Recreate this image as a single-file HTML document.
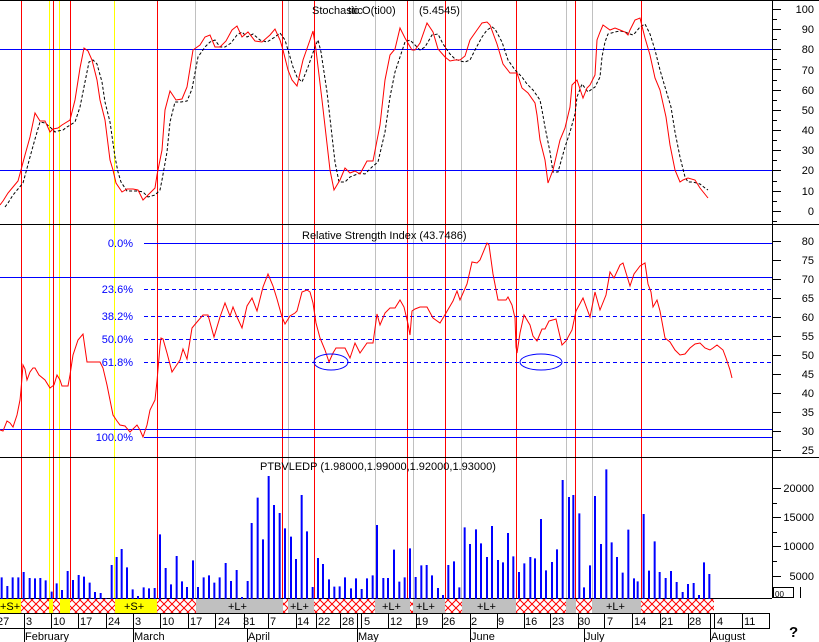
<!DOCTYPE html>
<html><head><meta charset="utf-8"><style>
html,body{margin:0;padding:0;background:#fff;}
svg{display:block;font-family:"Liberation Sans",sans-serif;}
</style></head><body>
<svg width="819" height="642" viewBox="0 0 819 642" xmlns="http://www.w3.org/2000/svg">
<defs>
<pattern id="h" width="8" height="8" patternUnits="userSpaceOnUse">
<rect width="8" height="8" fill="#fff"/>
<path d="M0 0L8 8M8 0L0 8" stroke="#f00" stroke-width="1"/>
</pattern>
</defs>
<rect width="819" height="642" fill="#fff"/>
<!-- vertical lines -->
<g stroke-width="1" shape-rendering="crispEdges">
<g stroke="#c0c0c0"><path d="M195.5 0V598M288.5 0V598M375.5 0V598M413.5 0V598M461.5 0V598M566.5 0V598M592.5 0V598"/></g>
<g stroke="#ff0"><path d="M49.5 0V598M59.5 0V598M114.5 0V598"/></g>
<g stroke="#f00"><path d="M21.5 0V598M53.5 0V598M70.5 0V598M157.5 0V598M282.5 0V598M314.5 0V598M407.5 0V598M445.5 0V598M516.5 0V598M575.5 0V598M641.5 0V598"/></g>
</g>
<!-- horizontal lines -->
<g shape-rendering="crispEdges" stroke-width="1">
<path d="M0 49.5H772M0 170.5H772M0 277.5H772M0 429.5H772M144 243.5H772M144 437.5H772" stroke="#00f"/>
<path d="M144 289.5H772M144 316.5H772M144 339.5H772M144 362.5H772" stroke="#00f" stroke-dasharray="4,3"/>
<path d="M0 0.5H819M0 224.5H819M0 457.5H819M0 598.5H772M772.5 0V598" stroke="#000"/>
</g>
<!-- stochastic -->
<polyline fill="none" stroke="#000" stroke-dasharray="3,2" transform="translate(5,2)" points="0,205 3,201 8,193 13,187 18,181 21,170 25,155 30,137 35,120 40,121 45,125 50,130 53,129 58,128 62,125 70,120 75,105 80,80 84,60 88,58 92,62 97,80 100,100 105,120 110,155 113,170 116,180 122,189 127,189 133,189 138,190 143,195 150,193 155,188 157,178 162,150 165,120 170,100 176,100 182,99 187,87 193,55 200,45 205,40 210,38 215,45 220,45 226,41 232,33 237,30 242,35 248,32 255,38 262,40 270,35 275,31 280,38 283,48 288,65 292,75 297,80 303,65 310,45 313,38 316,50 322,90 330,160 334,180 340,180 345,175 350,173 355,171 360,172 367,165 373,160 380,130 385,95 390,70 395,55 400,40 405,38 412,45 415,48 420,45 427,33 433,32 438,42 445,52 450,57 455,59 460,60 465,58 470,48 477,35 482,28 487,25 490,27 497,40 503,58 510,68 517,75 522,82 528,88 535,98 537,108 540,125 545,150 548,170 553,170 560,145 565,130 570,112 572,95 577,82 583,90 587,87 590,85 595,75 597,55 600,40 603,32 610,30 615,29 620,30 625,32 628,33 630,31 635,25 640,22 645,32 650,48 655,68 660,85 666,105 670,130 675,155 680,175 683,180 688,180 695,182 700,186 703,188"/>
<polyline fill="none" stroke="#f00" points="0,205 3,201 8,193 13,187 18,181 21,170 25,155 30,137 35,113 40,121 45,121 50,132 53,129 58,128 62,125 70,120 75,100 80,68 84,48 88,51 92,60 97,80 100,100 105,120 110,160 113,170 116,183 122,192 127,189 133,189 138,190 143,200 150,193 155,188 157,175 162,150 165,110 170,91 176,100 182,99 187,87 193,50 200,45 205,37 210,35 215,47 220,47 226,41 232,30 237,26 242,37 248,32 255,41 262,42 270,35 275,29 280,40 283,50 288,70 292,80 297,86 303,60 310,40 313,31 316,50 322,100 330,170 334,190 340,180 345,168 350,173 355,171 360,174 367,161 373,161 380,125 385,80 390,55 395,49 400,28 405,38 412,50 415,50 420,43 427,23 433,32 438,49 445,57 450,61 455,60 460,60 465,56 470,40 477,30 482,23 487,22 490,25 497,44 503,64 510,73 517,73 522,88 528,93 535,103 537,115 540,140 545,160 548,183 553,170 560,140 565,128 570,107 572,85 577,80 583,98 587,88 590,85 595,75 597,40 600,32 603,25 610,30 615,28 620,30 625,32 628,35 630,30 635,20 640,18 645,38 650,55 655,78 660,90 666,117 670,145 675,170 680,182 683,180 688,178 695,180 700,188 708,198"/>
<!-- RSI -->
<polyline fill="none" stroke="#f00" points="0,430 3,431 7,421 10,423 13,427 17,415 20,400 21,390 23,365 25,369 27,380 30,372 33,368 35,368 39,375 45,380 50,388 54,385 57,375 60,380 62,386 68,386 70,375 73,355 78,340 83,334 87,362 93,362 100,362 103,368 107,385 110,400 113,415 117,421 120,425 125,426 130,432 133,429 137,425 140,430 143,437 147,425 150,410 155,400 157,381 160,346 161,338 163,339 167,353 172,372 176,366 180,360 183,349 187,359 192,328 197,322 203,315 208,315 214,337 220,317 225,303 230,316 233,307 237,317 242,328 247,306 252,298 257,311 263,287 268,274 273,286 277,299 282,317 285,324 290,316 295,313 297,311 302,292 307,290 310,292 313,303 316,323 320,338 325,350 329,362 333,353 336,348 345,348 350,358 355,343 360,353 367,343 373,343 377,314 380,325 385,313 390,308 395,308 400,300 404,307 408,324 410,335 412,311 415,309 420,307 427,307 433,318 440,323 446,313 453,301 457,291 460,300 467,284 472,262 477,263 480,260 487,243 489,245 493,274 498,300 506,300 508,297 512,305 515,318 516,347 517,353 520,333 524,315 530,325 533,336 537,341 542,329 545,329 549,321 556,319 558,328 562,345 566,341 572,330 576,311 583,298 590,317 595,292 600,310 606,295 610,272 614,278 620,265 623,263 630,286 634,274 640,266 645,263 648,284 651,292 653,307 657,300 660,311 665,338 670,342 675,350 680,355 685,354 690,348 695,344 700,343 705,348 710,350 713,348 717,345 723,350 726,358 730,370 732,378"/>
<ellipse cx="331" cy="362" rx="17" ry="8" fill="none" stroke="#00f"/>
<ellipse cx="541" cy="362" rx="21" ry="8" fill="none" stroke="#00f"/>
<!-- volume -->
<g transform="translate(0,455) scale(0.33333)" stroke="#00f" stroke-width="6" fill="none">
<path d="M5 367V432M22 393V432M38 367V432M55 367V432M71 351V432M89 369V432M105 370V432M121 369V432M137 376V432M155 410V432M170 385V432M186 405V432M203 348V432M219 375V432M236 360V432M252 365V432M269 383V432M285 411V432M302 414V432M318 430V432M335 330V432M350 306V432M365 282V432M381 337V432M398 403V432M414 423V432M431 397V432M447 400V432M464 399V432M480 238V432M497 339V432M513 388V432M530 303V432M546 379V432M561 396V432M579 316V432M594 396V432M611 367V432M627 361V432M643 383V432M659 367V432M677 324V432M693 378V432M710 345V432M726 426V432M743 378V432M755 204V432M773 128V432M789 253V432M806 63V432M822 150V432M839 174V432M855 220V432M873 245V432M888 312V432M905 120V432M921 229V432M938 396V432M954 309V432M969 327V432M987 373V432M1003 395V432M1019 394V432M1035 367V432M1053 400V432M1068 370V432M1085 402V432M1101 370V432M1118 361V432M1131 210V432M1150 369V432M1164 369V432M1182 284V432M1198 380V432"/>
</g>
<g transform="translate(400,455) scale(0.33333)" stroke="#00f" stroke-width="6" fill="none">
<path d="M14 367V432M30 280V432M47 366V432M64 331V432M80 330V432M96 361V432M114 399V432M129 420V432M145 330V432M162 319V432M178 397V432M194 217V432M210 267V432M228 223V432M243 265V432M261 306V432M276 213V432M294 315V432M309 322V432M324 234V432M340 304V432M357 351V432M373 325V432M391 306V432M405 310V432M423 192V432M438 346V432M456 321V432M471 283V432M488 75V432M507 126V432M520 120V432M538 175V432M552 397V432M570 331V432M585 123V432M603 267V432M619 43V432M635 262V432M651 306V432M668 353V432M685 224V432M702 370V432M713 379V432M731 177V432M747 347V432M764 259V432M779 351V432M797 369V432M813 348V432M830 381V432M848 411V432M864 387V432M881 384V432M897 420V432M912 322V432M928 357V432"/>
</g>
<!-- titles -->
<g font-size="11" fill="#000">
<text x="312" y="14">Stochastic</text>
<text x="348" y="14">tic O(ti00)</text>
<text x="419" y="14">(5.4545)</text>
<text x="302" y="239">Relative Strength Index (43.7486)</text>
<text x="260" y="470">PTBVLEDP (1.98000,1.99000,1.92000,1.93000)</text>
</g>
<g font-size="11" fill="#00f" text-anchor="end">
<text x="133" y="247">0.0%</text>
<text x="133" y="293">23.6%</text>
<text x="133" y="320">38.2%</text>
<text x="133" y="343">50.0%</text>
<text x="133" y="366">61.8%</text>
<text x="133" y="441">100.0%</text>
</g>
<!-- right axis -->
<g font-size="11" fill="#000" text-anchor="end">
<text x="814" y="13">100</text><text x="814" y="33">90</text><text x="814" y="53">80</text><text x="814" y="74">70</text><text x="814" y="94">60</text><text x="814" y="114">50</text><text x="814" y="134">40</text><text x="814" y="154">30</text><text x="814" y="174">20</text><text x="814" y="195">10</text><text x="814" y="215">0</text>
<text x="814" y="245">80</text><text x="814" y="264">75</text><text x="814" y="283">70</text><text x="814" y="302">65</text><text x="814" y="321">60</text><text x="814" y="340">55</text><text x="814" y="359">50</text><text x="814" y="378">45</text><text x="814" y="397">40</text><text x="814" y="416">35</text><text x="814" y="435">30</text><text x="814" y="454">25</text>
<text x="814" y="492">20000</text><text x="814" y="521">15000</text><text x="814" y="550">10000</text><text x="814" y="580">5000</text>
</g>
<g stroke="#000" shape-rendering="crispEdges">
<path d="M772 9.5H781M772 29.5H781M772 49.5H781M772 69.5H781M772 90.5H781M772 110.5H781M772 130.5H781M772 150.5H781M772 170.5H781M772 191.5H781M772 211.5H781M772 241.5H781M772 260.5H781M772 279.5H781M772 298.5H781M772 317.5H781M772 336.5H781M772 355.5H781M772 374.5H781M772 393.5H781M772 412.5H781M772 431.5H781M772 450.5H781M772 488.5H781M772 517.5H781M772 546.5H781M772 576.5H781"/>
<path d="M772 19.5H777M772 39.5H777M772 59.5H777M772 80.5H777M772 100.5H777M772 120.5H777M772 140.5H777M772 160.5H777M772 181.5H777M772 201.5H777M772 221.5H777M772 503.5H777M772 532.5H777M772 561.5H777M772 591.5H777"/>
<rect x="773.5" y="587.5" width="20" height="10" fill="#fff"/>
<path d="M800.5 587V598"/>
</g>
<text x="775" y="597" font-size="8">00</text>
<!-- band -->
<g shape-rendering="crispEdges">
<rect x="0" y="599" width="770" height="14" fill="url(#h)"/>
<g fill="#ff0"><rect x="0" y="599" width="21" height="14"/><rect x="49" y="599" width="4" height="14"/><rect x="60" y="599" width="10" height="14"/><rect x="115" y="599" width="42" height="14"/></g>
<g fill="#c0c0c0"><rect x="196" y="599" width="87" height="14"/><rect x="288" y="599" width="26" height="14"/><rect x="375" y="599" width="35" height="14"/><rect x="413" y="599" width="32" height="14"/><rect x="462" y="599" width="54" height="14"/><rect x="566" y="599" width="10" height="14"/><rect x="592" y="599" width="49" height="14"/></g>
<rect x="714" y="599" width="56" height="14" fill="#fff"/>
<path d="M0 613.5H770M0 628.5H770" stroke="#000"/>
</g>
<g font-size="11" fill="#000">
<text x="0" y="610">+S+</text><text x="124" y="610">+S+</text>
<text x="228" y="610">+L+</text><text x="290" y="610">+L+</text><text x="382" y="610">+L+</text><text x="416" y="610">+L+</text><text x="477" y="610">+L+</text><text x="606" y="610">+L+</text>
</g>
<g stroke="#000" shape-rendering="crispEdges">
<path d="M24.5 613V642M51.5 613V628M78.5 613V628M106.5 613V628M133.5 613V642M160.5 613V628M188.5 613V628M215.5 613V628M244.5 613V628M247.5 628V642M268.5 613V628M296.5 613V628M316.5 613V628M340.5 613V628M357.5 613V642M361.5 613V628M388.5 613V628M416.5 613V628M442.5 613V628M470.5 613V642M497.5 613V628M524.5 613V628M550.5 613V628M578.5 613V628M584.5 628V642M604.5 613V628M632.5 613V628M660.5 613V628M688.5 613V628M710.5 613V642M714.5 613V628M742.5 613V628M769.5 613V628"/>
</g>
<g font-size="11" fill="#000">
<text x="-3" y="625">27</text><text x="26" y="625">3</text><text x="53" y="625">10</text><text x="80" y="625">17</text><text x="108" y="625">24</text><text x="135" y="625">3</text><text x="162" y="625">10</text><text x="190" y="625">17</text><text x="218" y="625">24</text><text x="243" y="625">31</text><text x="270" y="625">7</text><text x="297" y="625">14</text><text x="318" y="625">22</text><text x="342" y="625">28</text><text x="364" y="625">5</text><text x="390" y="625">12</text><text x="416" y="625">19</text><text x="443" y="625">26</text><text x="471" y="625">2</text><text x="498" y="625">9</text><text x="525" y="625">16</text><text x="552" y="625">23</text><text x="578" y="625">30</text><text x="607" y="625">7</text><text x="634" y="625">14</text><text x="661" y="625">21</text><text x="689" y="625">28</text><text x="717" y="625">4</text><text x="744" y="625">11</text>
<text x="25" y="640">February</text><text x="134" y="640">March</text><text x="248" y="640">April</text><text x="358" y="640">May</text><text x="471" y="640">June</text><text x="585" y="640">July</text><text x="711" y="640">August</text>
</g>
<text x="789" y="637" font-size="15" font-weight="bold" fill="#000">?</text>
</svg>
</body></html>
